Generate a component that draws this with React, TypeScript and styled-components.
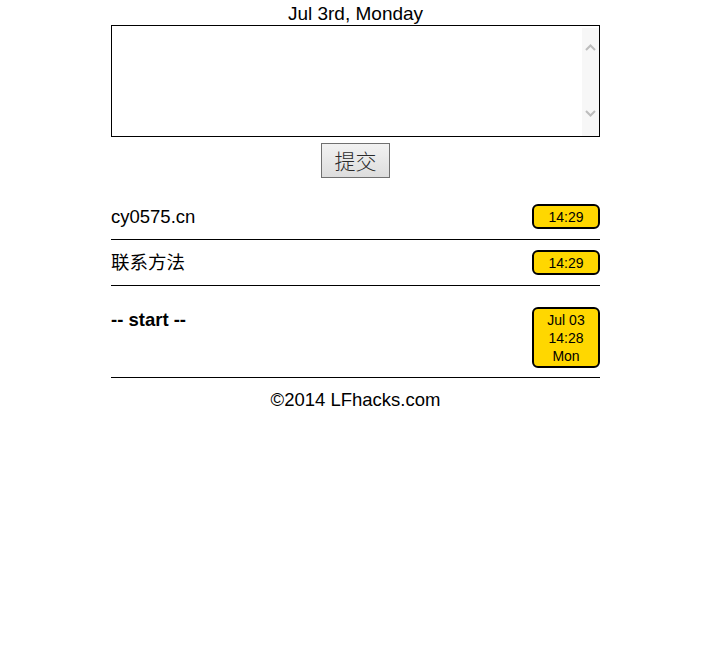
import React from 'react'
import styled, { createGlobalStyle } from 'styled-components'

const GlobalStyle = createGlobalStyle`
  body {
    margin: 0;
    background: #fff;
    color: #000;
    font-family: "Liberation Sans", "Noto Sans CJK SC", sans-serif;
  }
`

const Page = styled.div`
  width: 495px;
  margin: 0 auto;
  padding-left: 6px;
  box-sizing: border-box;
`

const DateTitle = styled.div`
  height: 25px;
  line-height: 27px;
  font-size: 19px;
  text-align: center;
`

const Frame = styled.div`
  display: flex;
  height: 112px;
  border: 1px solid #000;
  box-sizing: border-box;
`

const Input = styled.textarea`
  flex: 1;
  border: none;
  outline: none;
  resize: none;
  overflow: hidden;
  padding: 2px;
  font: inherit;
`

const Track = styled.div`
  width: 17px;
  margin-top: 2px;
  background: #f7f7f7;
  display: flex;
  flex-direction: column;
  justify-content: space-between;
  align-items: center;
  padding: 16px 0 19px;
`

const SubmitRow = styled.div`
  display: flex;
  justify-content: center;
  padding-top: 6px;
`

const Submit = styled.button`
  width: 69px;
  height: 35px;
  border: 1px solid #707070;
  background: linear-gradient(#f2f2f2, #dddddd);
  color: #2a2a2a;
  font-size: 21px;
  font-family: "Noto Sans CJK SC", serif;
  font-weight: 300;
  padding: 0;
  line-height: 1;
`

const List = styled.div`
  margin-top: 16px;
`

const Row = styled.div<{ $top?: number; $bottom?: number }>`
  display: flex;
  justify-content: space-between;
  align-items: flex-start;
  padding: ${p => p.$top ?? 10}px 0 ${p => p.$bottom ?? 10}px;
  border-bottom: 1px solid #000;
`

const Title = styled.div<{ $bold?: boolean }>`
  font-size: 18.5px;
  line-height: 25px;
  font-weight: ${p => (p.$bold ? 'bold' : 'normal')};
`

const Stamp = styled.div`
  width: 68px;
  box-sizing: border-box;
  border: 2px solid #000;
  border-radius: 6px;
  background: #ffd700;
  font-size: 14px;
  line-height: 18px;
  text-align: center;
  padding: 1.5px 0;
`

const Footer = styled.div`
  text-align: center;
  font-size: 18.5px;
  line-height: 22px;
  padding-top: 11px;
`

const Chevron = ({ up }: { up?: boolean }) => (
  <svg width="11" height="7" viewBox="0 0 11 7">
    <path
      d={up ? 'M1 6 L5.5 1.5 L10 6' : 'M1 1 L5.5 5.5 L10 1'}
      fill="none"
      stroke="#bdbdbd"
      strokeWidth="2"
    />
  </svg>
)

const entries = [
  { title: 'cy0575.cn', stamp: ['14:29'] },
  { title: '联系方法', stamp: ['14:29'] },
  { title: '-- start --', stamp: ['Jul 03', '14:28', 'Mon'], bold: true, top: 21, bottom: 9 }
]

export default function App() {
  return (
    <Page>
      <GlobalStyle />
      <DateTitle>Jul 3rd, Monday</DateTitle>
      <Frame>
        <Input />
        <Track>
          <Chevron up />
          <Chevron />
        </Track>
      </Frame>
      <SubmitRow>
        <Submit>提交</Submit>
      </SubmitRow>
      <List>
        {entries.map(e => (
          <Row key={e.title} $top={e.top} $bottom={e.bottom}>
            <Title $bold={e.bold}>{e.title}</Title>
            <Stamp>
              {e.stamp.map(line => (
                <div key={line}>{line}</div>
              ))}
            </Stamp>
          </Row>
        ))}
      </List>
      <Footer>©2014 LFhacks.com</Footer>
    </Page>
  )
}
